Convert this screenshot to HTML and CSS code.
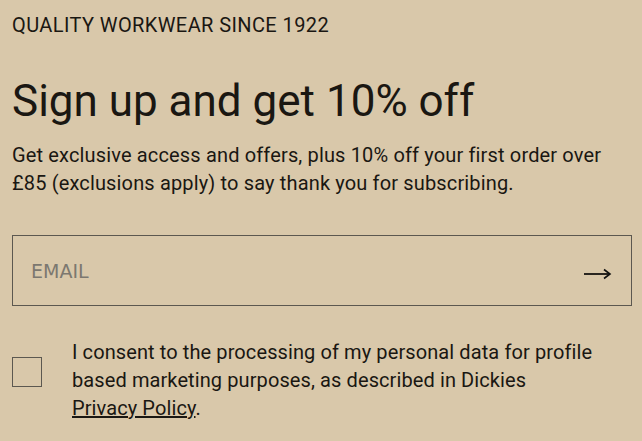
FILE: index.html
```html
<!DOCTYPE html>
<html>
<head>
    <title>Newsletter</title>
    <link rel="stylesheet" href="styles.css">
</head>
<body>
    <div class="signup">
        <p class="tagline">QUALITY WORKWEAR SINCE 1922</p>
        <h1>Sign up and get 10% off</h1>
        <p class="intro">Get exclusive access and offers, plus 10% off your first order over £85 (exclusions apply) to say thank you for subscribing.</p>

        <!-- Email field with submit arrow -->
        <form class="email-form" onsubmit="return false;">
            <input type="email" class="email-input" placeholder="EMAIL">
            <button type="submit" class="email-submit" aria-label="Subscribe">
                <svg width="28" height="12" viewBox="0 0 28 12">
                    <path d="M0 6h25" stroke="#2a2620" stroke-width="2" fill="none"/>
                    <path d="M20 1.5l6 4.5-6 4.5" stroke="#111" stroke-width="1.6" fill="none"/>
                </svg>
            </button>
        </form>

        <label class="consent">
            <input type="checkbox" class="consent-box">
            <span class="consent-text">I consent to the processing of my personal data for profile based marketing purposes, as described in Dickies <a href="#">Privacy Policy</a>.</span>
        </label>
    </div>
</body>
</html>
```

FILE: styles.css
```css
body {
    margin: 0;
    background-color: #d9c8aa;
    color: #1a1712;
    font-family: Roboto, "Liberation Sans", sans-serif;
}
.signup {
    padding: 11px 10px 0 12px;
}
.tagline {
    margin: 0;
    font-size: 20px;
    line-height: 28px;
    letter-spacing: 0.4px;
}
h1 {
    margin: 36px 0 0;
    font-size: 44px;
    font-weight: 400;
    line-height: 52px;
    letter-spacing: 0;
}
.intro {
    margin: 14px 0 0;
    font-size: 20px;
    line-height: 28px;
    letter-spacing: 0.15px;
    max-width: 615px;
}
.email-form {
    display: flex;
    align-items: center;
    margin-top: 38px;
    height: 71px;
    border: 1px solid #5c5850;
    box-sizing: border-box;
}
.email-input {
    flex: 1;
    height: 100%;
    border: none;
    background: transparent;
    padding: 0 0 0 18px;
    font-family: "DejaVu Sans", sans-serif;
    font-size: 19px;
    color: #333;
    outline: none;
}
.email-input::placeholder {
    color: #7c7870;
}
.email-submit {
    background: none;
    border: none;
    padding: 6px 19px 0 10px;
    cursor: pointer;
    display: flex;
}
.consent {
    display: flex;
    align-items: flex-start;
    margin-top: 32px;
}
.consent-box {
    appearance: none;
    flex: none;
    width: 30px;
    height: 30px;
    margin: 19px 30px 0 0;
    border: 1px solid #5c5850;
    background: transparent;
}
.consent-text {
    font-size: 20px;
    line-height: 28px;
    letter-spacing: 0.1px;
    max-width: 521px;
}
.consent-text a {
    color: inherit;
}
```
